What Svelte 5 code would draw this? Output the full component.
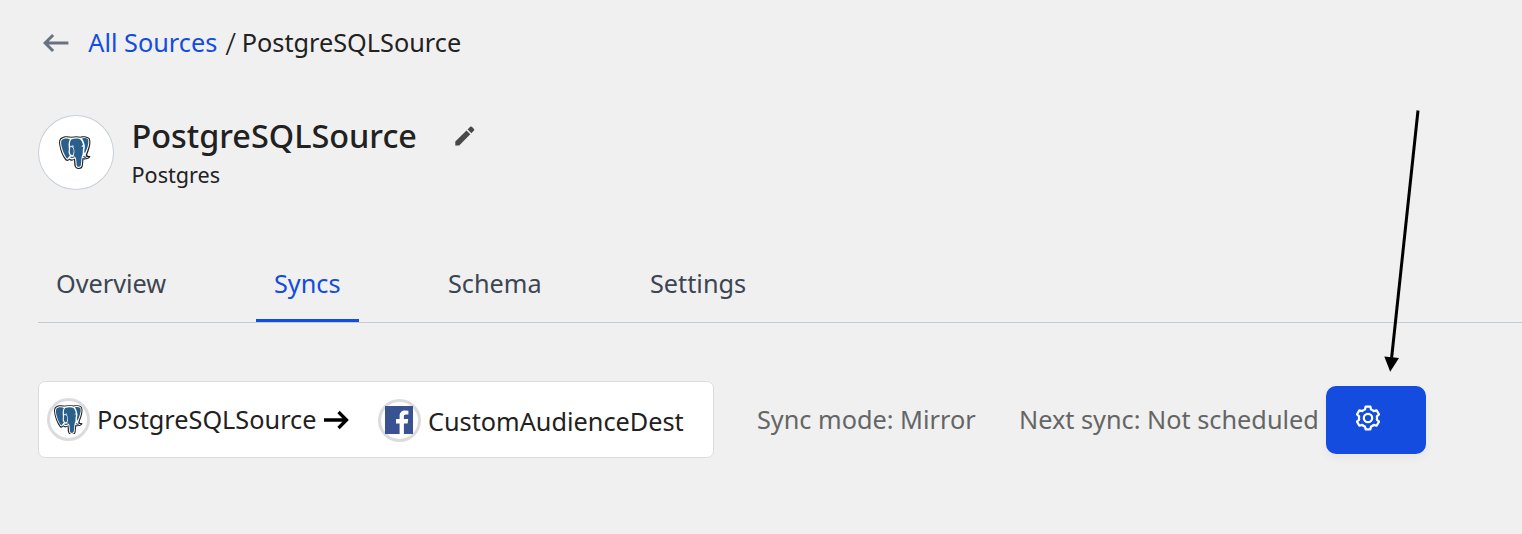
<script>
  const tabs = [
    { name: 'Overview', cls: 't1' },
    { name: 'Syncs', cls: 't2', active: true },
    { name: 'Schema', cls: 't3' },
    { name: 'Settings', cls: 't4' }
  ];
</script>

{#snippet elephant(size)}
  <svg width={size} height={size * 97 / 94} viewBox="0 0 94 97">
    <path d="M13 2C22 -1 32 3 37 2C46 0 56 0 63 2C70 0 82 0 89 6C96 15 91 35 83 54C82 58 85 59 92 59C93 64 84 70 72 69L70 88C68 96 63 97 58 97C51 97 47 93 45 86L44 70C40 74 33 73 30 70C26 76 20 74 16 67C7 54 1 32 0 19C0 9 5 4 13 2Z" fill="#222"/>
    <path d="M14 5C22 2 30 5 36 5C46 3 56 3 63 5C70 2 81 3 87 8C92 16 88 33 79 54C77 60 81 62 87 62C83 66 76 66 69 65L67 87C66 92 62 94 58 94C53 94 49 91 49 85L47 66C42 70 35 70 30 66C27 71 22 71 19 65C10 53 4 33 3 19C3 11 8 7 14 5Z" fill="#fff"/>
    <path d="M15 8C21 6 28 8 32 10C27 17 28 28 29 38C28 46 27 51 32 57C28 60 26 67 23 66C14 54 7 33 6 20C6 12 10 9 15 8Z" fill="#2b5f8b"/>
    <path d="M36 10C46 6 57 6 63 10C69 17 73 29 71 36C68 45 72 51 67 60C65 68 66 77 64 86C63 92 52 92 52 85L50 66C49 61 44 60 43 57C47 48 45 38 42 33Q39 29 33 30C31 22 32 15 36 10Z" fill="#2b5f8b"/>
    <path d="M68 7C76 5 83 7 86 11C88 22 83 37 76 51C72 46 76 38 76 32C76 23 72 14 68 7Z" fill="#2b5f8b"/>
    <path d="M33 33C40 31 43 37 43.500 44C42 49 43 57 38 56C31 54 31 46 33 33Z" fill="#2b5f8b"/>
    <path d="M34 62Q40 64 45 61M72 59Q74 63 80 63" fill="none" stroke="#2b5f8b" stroke-width="4"/>
    <path d="M37 30Q41 28 43 31M67 31Q71 27 74 29" fill="none" stroke="#fff" stroke-width="3"/>
  </svg>
{/snippet}

<main>
  <nav class="crumbs">
    <svg class="back" width="26" height="20" viewBox="0 0 26 20"><path d="M25.400 10H2.400M10.100 2L2.100 10L10.100 18" fill="none" stroke="#68737f" stroke-width="3"/></svg>
    <a href="#sources">All Sources</a><span class="slash">/</span><span>PostgreSQLSource</span>
  </nav>

  <header>
    <div class="avatar">{@render elephant(32)}</div>
    <div class="names">
      <h1>PostgreSQLSource</h1>
      <p>Postgres</p>
    </div>
    <svg class="pencil" width="20" height="20" viewBox="0 0 20 20" fill="#484848"><path d="M.3 15.6L11.5 4.5L15.3 8.3L4.2 19.4H.3ZM12.6 3.4L15.2.8Q16 .1 16.8.8L19 3Q19.800 3.800 19 4.600L16.400 7.200Z"/></svg>
  </header>

  <div class="tabs">
    {#each tabs as tab}
      <div class="tab {tab.cls}" class:active={tab.active}>{tab.name}</div>
    {/each}
  </div>

  <section>
    <div class="card">
      <div class="ring">{@render elephant(29)}</div>
      <span class="src">PostgreSQLSource</span>
      <svg class="to" width="26" height="20" viewBox="0 0 26 20"><path d="M0 10H23M14.500 2L22.500 10L14.500 18" fill="none" stroke="#000" stroke-width="3.300"/></svg>
      <div class="ring fb">
        <svg width="28" height="28" viewBox="0 0 28 28"><path fill="#385292" d="M0 0H28V28H0Z"/><path fill="#fff" d="M14.6 28V17.4H11V13.1H14.6V10C14.6 6.4 16.7 4.5 20 4.5Q22 4.5 23.4 4.7V8.5H21.1C19.3 8.5 18.9 9.4 18.9 10.6V13.1H23.2L22.6 17.4H18.9V28Z"/></svg>
      </div>
      <span class="dest">CustomAudienceDest</span>
    </div>
    <span class="mode">Sync mode: Mirror</span>
    <span class="next">Next sync: Not scheduled</span>
    <button aria-label="Sync settings">
      <svg width="28" height="28" viewBox="-14 -14 28 28" fill="none" stroke="#fff" stroke-width="2.200" stroke-linejoin="round"><path d="M-2.400 -11.300H2.400L3 -8.500Q4.600 -8 5.860 -6.850L8.600 -7.750L11 -3.600L8.860 -1.650Q9.200 0 8.860 1.650L11 3.600L8.600 7.750L5.860 6.850Q4.600 8 3 8.500L2.400 11.300H-2.400L-3 8.500Q-4.600 8 -5.860 6.850L-8.600 7.750L-11 3.600L-8.860 1.650Q-9.200 0 -8.860 -1.650L-11 -3.600L-8.600 -7.750L-5.860 -6.850Q-4.600 -8 -3 -8.500Z"/><circle r="4.200"/></svg>
    </button>
  </section>

  <svg class="pointer" width="50" height="270" viewBox="1380 105 50 270"><path d="M1418 110.500L1391.500 359" stroke="#000" stroke-width="3"/><path d="M1384.300 356.500L1399 358L1390.200 371.800Z"/></svg>
</main>

<style>
  :global(body) { background: #f0f0f0; }
  main { position: relative; box-sizing: border-box; width: 1522px; height: 534px; overflow: hidden; padding-left: 38px; font: 25.28px/36px "Noto Sans", sans-serif; color: #212121; white-space: nowrap; }
  svg { display: block; flex: none; }
  .crumbs { display: flex; align-items: center; height: 36px; padding: 24px 0 0 5px; }
  .back { margin: 2px 19.300px 0 0; }
  a { color: #134cde; text-decoration: none; }
  .slash { width: 12px; margin: 2px 4.500px 0 8px; font-size: 31px; font-weight: 300; }
  header { display: flex; height: 75px; margin-top: 55px; }
  .avatar { display: flex; align-items: center; justify-content: center; box-sizing: border-box; width: 76px; height: 75px; padding-right: 3px; border: 1px solid #c7cfd9; border-radius: 50%; background: #fff; }
  .names { width: 323.500px; margin-left: 17.500px; }
  h1 { margin: -2px 0 0; font-size: 32.4px; line-height: 44px; font-weight: 500; }
  p { margin: 0; font-size: 21.6px; line-height: 35px; }
  .pencil { margin-top: 10.500px; }
  .tabs { display: flex; height: 71px; margin-top: 61px; border-bottom: 1px solid #c3ccd4; color: #3c4652; }
  .tab { box-sizing: border-box; height: 71px; padding: 14px 18px 0; }
  .t1 { width: 146px; margin-right: 72px; }
  .t2 { width: 103px; margin-right: 71px; }
  .t3 { width: 130px; margin-right: 72px; }
  .active { color: #134cde; border-bottom: 3px solid #134cde; }
  section { display: flex; align-items: flex-start; height: 78px; margin-top: 58px; color: #646665; }
  .card { display: flex; align-items: center; box-sizing: border-box; width: 676px; height: 77px; padding-left: 8px; border: 1px solid #dcdcdc; border-radius: 7px; background: #fff; color: #212121; }
  .ring { display: flex; align-items: center; justify-content: center; box-sizing: border-box; width: 43px; height: 43px; border: 3px solid #dcdcdc; border-radius: 50%; flex: none; }
  .src { width: 219px; margin: -1px 0 0 7px; }
  .to { margin: 0 0 0 8px; }
  .fb { margin: 2px 0 0 28px; }
  .fb svg { margin: 0 1px 1px 0; }
  .dest { margin: 2px 0 0 7px; }
  .mode { width: 219px; margin: 20px 0 0 43px; }
  .next { width: 300px; margin: 20px 0 0 43px; }
  button { width: 100px; height: 68px; margin: 5px 0 0 7px; padding: 0 0 4px 28.400px; border: 0; border-radius: 10px; background: #134cde; box-shadow: 0 4px 10px #0000000c; }
  .pointer { position: absolute; left: 1380px; top: 105px; }
</style>
